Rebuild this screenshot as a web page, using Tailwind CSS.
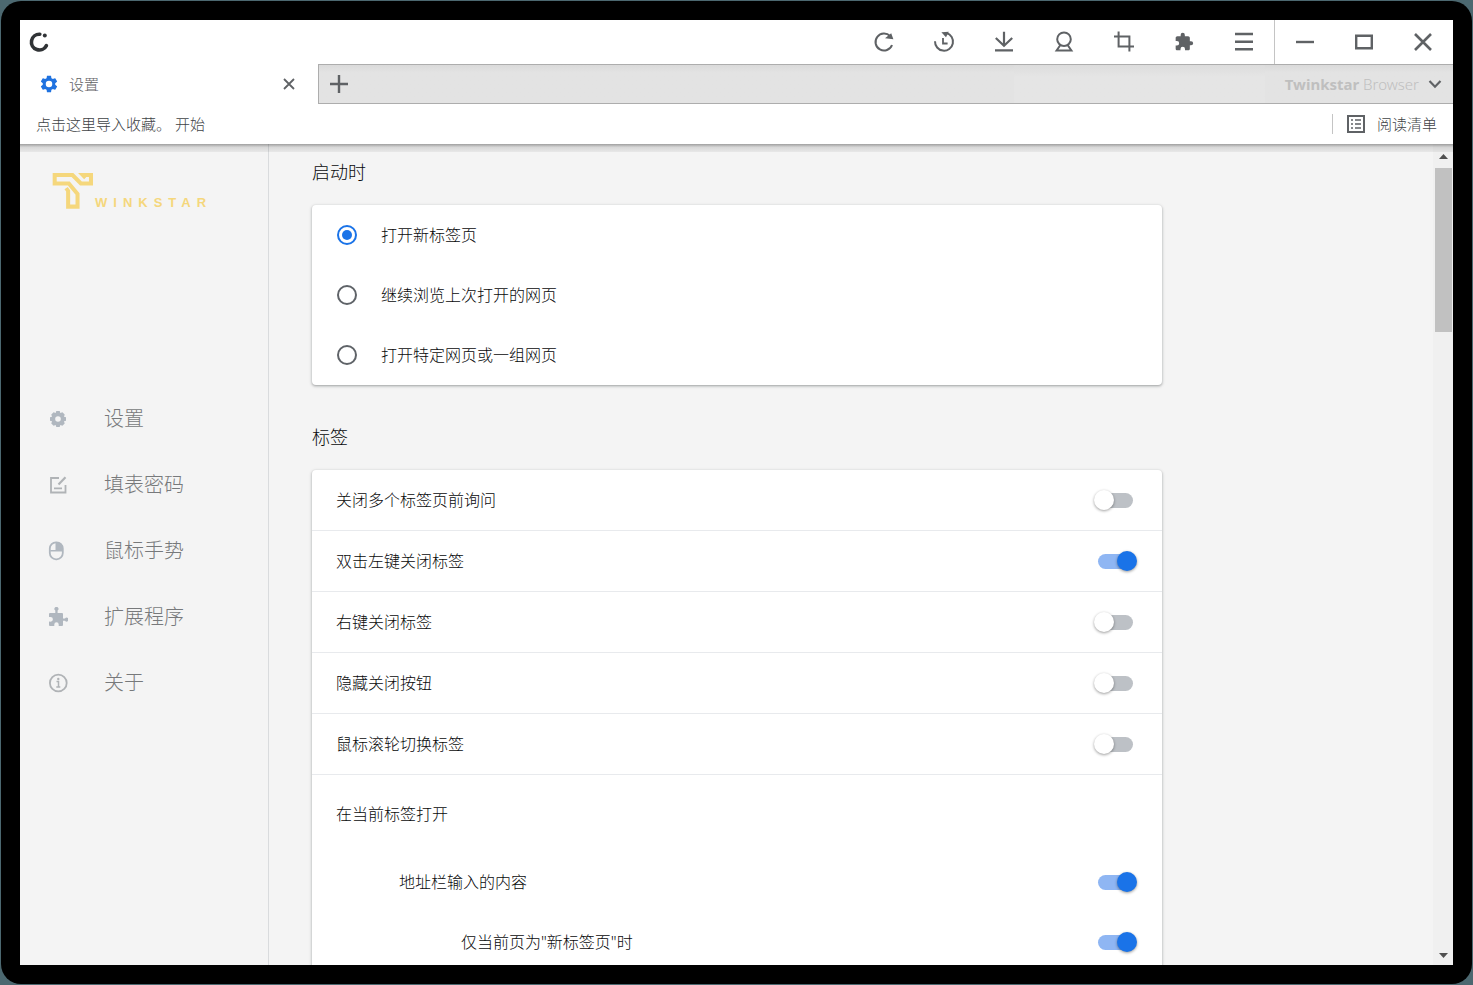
<!DOCTYPE html>
<html lang="zh-CN">
<head>
<meta charset="utf-8">
<meta name="viewport" content="width=device-width, initial-scale=1">
<title>设置</title>
<script src="https://cdn.jsdelivr.net/npm/@tailwindcss/browser@4"></script>
</head>
<body class="h-screen overflow-hidden bg-[#4c6870] p-px font-['Noto_Sans','Noto_Sans_CJK_SC',sans-serif] text-[#08090a]">
<div class="h-full rounded-[20px] bg-black p-[19px]">
<div class="flex h-full flex-col overflow-hidden bg-white">

  <!-- Title bar -->
  <header class="flex h-11 shrink-0 items-center text-[#5f6265]">
    <svg class="ml-[7px] size-6" viewBox="0 0 24 24" fill="none" stroke="#303336" stroke-width="3.6" stroke-linecap="round"><path d="M12.8 4.2A7.900 7.900 0 1 0 19.400 15.600"/><circle cx="17.800" cy="5.400" r="2" fill="#303336" stroke="none"/></svg>
    <nav class="ml-auto flex h-full" aria-label="工具栏">
      <button class="grid w-15 place-items-center" aria-label="刷新"><svg class="size-6" viewBox="0 0 24 24" fill="none" stroke="currentColor" stroke-width="2"><path d="M20 15A8.500 8.500 0 1 1 18.200 6.200"/><path d="M19.200 3.200l2.200 6-8.400-1z" fill="currentColor" stroke="none"/></svg></button>
      <button class="grid w-15 place-items-center" aria-label="恢复"><svg class="size-6" viewBox="0 0 24 24" fill="none" stroke="currentColor" stroke-width="2"><path d="M3 11.300A9 9 0 1 0 14.500 3"/><path d="M9.400 2.200l7.400-.4L14 7.200z" fill="currentColor" stroke="none"/><path d="M11 8v5.500h4.600" stroke-width="1.800"/></svg></button>
      <button class="grid w-15 place-items-center" aria-label="下载"><svg class="size-6" viewBox="0 0 24 24" fill="none" stroke="currentColor" stroke-width="2.200"><path d="M12 1.800V15M3.800 8l8.200 7.800L20.200 8M3 20.400h18"/></svg></button>
      <button class="grid w-15 place-items-center" aria-label="用户"><svg class="size-6" viewBox="0 0 24 24" fill="none" stroke="currentColor" stroke-width="2"><circle cx="12" cy="9.200" r="6.800"/><path d="M8.400 15l-3.800 5.500h14.800L15.600 15"/></svg></button>
      <button class="grid w-15 place-items-center" aria-label="截图"><svg class="size-6" viewBox="0 0 24 24" fill="none" stroke="currentColor" stroke-width="2"><path d="M6.600 1.600v14.800H22M2 6.600h15.400V21.500"/></svg></button>
      <button class="grid w-15 place-items-center" aria-label="扩展"><svg class="size-5" viewBox="0 0 24 24" fill="currentColor"><path d="M20.500 11H19V7c0-1.100-.9-2-2-2h-4V3.500a2.500 2.500 0 0 0-5 0V5H4c-1.100 0-2 .9-2 2v3.800h1.500a2.700 2.700 0 0 1 0 5.400H2V20c0 1.100.9 2 2 2h3.800v-1.500a2.700 2.700 0 0 1 5.400 0V22H17c1.100 0 2-.9 2-2v-4h1.500a2.500 2.500 0 0 0 0-5z"/></svg></button>
      <button class="grid w-15 place-items-center" aria-label="菜单"><svg class="size-6" viewBox="0 0 24 24" fill="none" stroke="currentColor" stroke-width="2.400"><path d="M3 4h18M3 11.700h18M3 19.200h18"/></svg></button>
    </nav>
    <div class="grid h-full w-[179px] grid-cols-3 border-l border-[#c4c4c4]">
      <button class="grid place-items-center" aria-label="最小化"><svg class="size-6" viewBox="0 0 24 24" fill="none" stroke="currentColor" stroke-width="2.400"><path d="M3 12h18"/></svg></button>
      <button class="grid place-items-center" aria-label="最大化"><svg class="size-6" viewBox="0 0 24 24" fill="none" stroke="currentColor" stroke-width="2.400"><path d="M4.200 5.700h15.600v12.600H4.200z"/></svg></button>
      <button class="grid place-items-center" aria-label="关闭"><svg class="size-6" viewBox="0 0 24 24" fill="none" stroke="currentColor" stroke-width="2.600"><path d="M4 4l16 16M20 4L4 20"/></svg></button>
    </div>
  </header>

  <!-- Tab strip -->
  <div class="flex h-10 shrink-0 text-[#5f6265]">
    <div class="flex w-[298px] shrink-0 items-center pr-5 pl-[19px]">
      <svg class="size-5" viewBox="0 0 24 24" fill="#1f72e0"><path fill-rule="evenodd" d="M19.430 12.980c.04-.32.070-.64.070-.98s-.030-.66-.070-.98l2.110-1.650c.19-.15.240-.42.120-.64l-2-3.460c-.12-.22-.39-.3-.61-.22l-2.490 1c-.52-.4-1.080-.73-1.690-.98l-.38-2.650C14.460 2.180 14.250 2 14 2h-4c-.25 0-.46.18-.49.42l-.38 2.650c-.61.25-1.170.59-1.690.98l-2.490-1c-.23-.09-.49 0-.61.220l-2 3.460c-.13.22-.07.49.120.640l2.110 1.650c-.04.32-.07.65-.07.98s.030.66.070.98l-2.110 1.650c-.19.15-.24.42-.12.640l2 3.460c.12.22.39.3.61.220l2.490-1c.52.4 1.080.730 1.690.980l.38 2.650c.030.240.240.420.490.420h4c.25 0 .46-.18.490-.42l.38-2.650c.61-.25 1.170-.59 1.690-.98l2.490 1c.23.090.49 0 .61-.22l2-3.460c.12-.22.070-.49-.12-.64zM12 15.900a3.900 3.900 0 1 1 0-7.800 3.900 3.900 0 0 1 0 7.800z"/></svg>
      <span class="ml-2.5 text-[15px] font-light">设置</span>
      <button class="ml-auto grid size-[18px] place-items-center" aria-label="关闭标签"><svg class="size-3" viewBox="0 0 12 12" fill="none" stroke="currentColor" stroke-width="1.800"><path d="M1 1l10 10M11 1L1 11"/></svg></button>
    </div>
    <div class="flex flex-1 items-center border-y border-l border-[#adadad] bg-[#e3e3e3] bg-linear-to-b from-[#dadada] to-[#e3e3e3] to-20%">
      <button class="ml-2 grid size-6 place-items-center" aria-label="新标签页"><svg class="size-5" viewBox="0 0 20 20" fill="none" stroke="currentColor" stroke-width="2.400"><path d="M10 1v18M1 10h18"/></svg></button>
      <div class="ml-auto h-[38px] w-[251px] bg-linear-to-b from-[#dcdcdc] to-[#e5e5e5] to-30%"></div>
      <div class="ml-5 font-['Noto_Sans'] text-[15px] text-[#bfbfbf]"><b class="font-bold">Twinkstar</b> <span class="font-light">Browser</span></div>
      <button class="mr-2 ml-1.5 grid size-5 place-items-center" aria-label="标签列表"><svg class="size-4" viewBox="0 0 16 16" fill="none" stroke="currentColor" stroke-width="2.200"><path d="M2.500 5L8 10.700 13.500 5"/></svg></button>
    </div>
  </div>

  <!-- Bookmarks bar -->
  <div class="flex h-10 shrink-0 items-center pr-4 pl-4 text-[15px] font-light text-[#404346]">
    <a href="#">点击这里导入收藏。</a>
    <a href="#" class="ml-1">开始</a>
    <a href="#" class="ml-auto flex h-5 items-center border-l border-[#c4c4c4] pl-3.5">
      <svg class="mr-3 size-[18px]" viewBox="0 0 18 18" fill="none" stroke="#5f6265" stroke-width="2"><path d="M1 1h16v16H1z"/><path d="M4 5h2M4 9h2M4 13h2M8 5h6M8 9h6M8 13h6" stroke-width="1.600"/></svg>
      阅读清单</a>
  </div>

  <div class="relative flex min-h-0 flex-1 bg-[#f4f4f4]">
    <div class="pointer-events-none absolute inset-x-0 top-0 h-2 bg-linear-to-b from-black/35 via-black/12 via-40% to-black/5"></div>

    <!-- Sidebar -->
    <aside class="w-[249px] shrink-0 border-r border-[#d9dbdd]">
      <div class="flex items-end gap-0.5 pt-7 pl-8 text-[#f5d77c]">
        <svg class="h-[37px] w-[41px]" viewBox="13 12 122 110" fill="none" stroke="currentColor" stroke-width="12"><path d="M55 60l6 8v47h28V77L63 46H21V21h53l25 25h30V21h-24l8 8"/></svg>
        <span class="font-['Liberation_Sans'] text-[13px] leading-3 font-bold tracking-[6px]">WINKSTAR</span>
      </div>
      <nav class="mt-[177px] flex flex-col text-[20px] font-light text-[#77797b]">
        <a href="#" class="flex h-[66px] items-center pl-7"><svg class="size-5" viewBox="0 0 20 20" fill="#b0b7bf"><path fill-rule="evenodd" d="M8.300 2h3.400l.6 1.900 2.100-.6 2.300 2.300-.7 2.100 2 .6v3.400l-2 .6.7 2.100-2.300 2.300-2.100-.7-.6 2H8.300l-.6-2-2.100.7-2.300-2.300.7-2.100-2-.6V8.300l2-.6-.7-2.100 2.300-2.300 2.100.6zM10 7.200a2.800 2.800 0 1 0 0 5.600 2.800 2.800 0 0 0 0-5.600z"/></svg><span class="ml-9">设置</span></a>
        <a href="#" class="flex h-[66px] items-center pl-7"><svg class="size-5" viewBox="0 0 20 20" fill="none" stroke="#b0b3b6" stroke-width="1.800"><path d="M11 3H3v14.500h14.500V10M6 13.300h8"/><path d="M17.500 2.300l-7 7.200" stroke-width="2.200"/></svg><span class="ml-9">填表密码</span></a>
        <a href="#" class="flex h-[66px] items-center pl-7"><svg class="size-5" viewBox="0 0 20 20" fill="none" stroke="#b0b7bf" stroke-width="1.800"><rect x="1.800" y="1.300" width="13" height="17" rx="6.200"/><path d="M7.500 1.800C12 .8 14.800 3 14.800 7.500v3H2.300V9h5.200z" fill="#b0b7bf" stroke="none"/></svg><span class="ml-9">鼠标手势</span></a>
        <a href="#" class="flex h-[66px] items-center pl-7"><svg class="size-5" viewBox="0 0 20 20" fill="#b0b7bf"><path d="M7.300 6V3.500a2 2 0 1 1 2.300 0V6H14q1 0 1 1v4.500h2a2 2 0 1 1 0 2.200h-2V18q0 1-1 1h-3.300v-1.500a2.200 2.200 0 0 0-4.400 0V19H2q-1 0-1-1v-3.500l1.500.2a2.400 2.400 0 1 0 0-4.800L1 10V7q0-1 1-1z"/></svg><span class="ml-9">扩展程序</span></a>
        <a href="#" class="flex h-[66px] items-center pl-7"><svg class="size-5" viewBox="0 0 20 20" fill="none" stroke="#b0b3b6" stroke-width="1.800"><circle cx="10.300" cy="10" r="8.400"/><path d="M8.500 8.500h2v5M8.300 14h4" stroke-width="1.500"/><circle cx="10.300" cy="6" r="1.200" fill="#b0b3b6" stroke="none"/></svg><span class="ml-9">关于</span></a>
      </nav>
    </aside>

    <!-- Settings list -->
    <main class="min-w-0 flex-1 overflow-hidden px-[43px] pt-3.5 text-[16px] font-light">
      <section>
        <h2 class="text-[18px] leading-7">启动时</h2>
        <div class="mt-[19px] w-full max-w-[850px] rounded bg-white shadow-[0_1px_2px_rgba(60,64,67,0.3),0_1px_3px_1px_rgba(60,64,67,0.15)]">
          <label class="flex h-15 items-center gap-6 pl-[25px]"><input type="radio" name="startup" checked class="grid size-5 shrink-0 appearance-none place-items-center rounded-full border-2 border-[#5f6368] before:size-2.5 before:rounded-full checked:border-[#1a73e8] checked:before:bg-[#1a73e8]">打开新标签页</label>
          <label class="flex h-15 items-center gap-6 pl-[25px]"><input type="radio" name="startup" class="grid size-5 shrink-0 appearance-none place-items-center rounded-full border-2 border-[#5f6368] before:size-2.5 before:rounded-full checked:border-[#1a73e8] checked:before:bg-[#1a73e8]">继续浏览上次打开的网页</label>
          <label class="flex h-15 items-center gap-6 pl-[25px]"><input type="radio" name="startup" class="grid size-5 shrink-0 appearance-none place-items-center rounded-full border-2 border-[#5f6368] before:size-2.5 before:rounded-full checked:border-[#1a73e8] checked:before:bg-[#1a73e8]">打开特定网页或一组网页</label>
        </div>
      </section>
      <section class="mt-[38px]">
        <h2 class="text-[18px] leading-7">标签</h2>
        <div class="mt-[19px] w-full max-w-[850px] rounded bg-white shadow-[0_1px_2px_rgba(60,64,67,0.3),0_1px_3px_1px_rgba(60,64,67,0.15)]">
          <label class="flex h-[61px] items-center justify-between border-b border-[#e8eaed] pr-[29px] pl-6">关闭多个标签页前询问<input type="checkbox" role="switch" class="relative h-[15px] w-[35px] appearance-none rounded-full bg-[#bdc1c6] before:absolute before:-top-[3px] before:-left-1 before:size-5 before:rounded-full before:bg-white before:shadow-[0_1px_3px_rgba(0,0,0,0.4)] checked:bg-[#8fb6f3] checked:before:left-[19px] checked:before:bg-[#1a73e8]"></label>
          <label class="flex h-[61px] items-center justify-between border-b border-[#e8eaed] pr-[29px] pl-6">双击左键关闭标签<input type="checkbox" role="switch" checked class="relative h-[15px] w-[35px] appearance-none rounded-full bg-[#bdc1c6] before:absolute before:-top-[3px] before:-left-1 before:size-5 before:rounded-full before:bg-white before:shadow-[0_1px_3px_rgba(0,0,0,0.4)] checked:bg-[#8fb6f3] checked:before:left-[19px] checked:before:bg-[#1a73e8]"></label>
          <label class="flex h-[61px] items-center justify-between border-b border-[#e8eaed] pr-[29px] pl-6">右键关闭标签<input type="checkbox" role="switch" class="relative h-[15px] w-[35px] appearance-none rounded-full bg-[#bdc1c6] before:absolute before:-top-[3px] before:-left-1 before:size-5 before:rounded-full before:bg-white before:shadow-[0_1px_3px_rgba(0,0,0,0.4)] checked:bg-[#8fb6f3] checked:before:left-[19px] checked:before:bg-[#1a73e8]"></label>
          <label class="flex h-[61px] items-center justify-between border-b border-[#e8eaed] pr-[29px] pl-6">隐藏关闭按钮<input type="checkbox" role="switch" class="relative h-[15px] w-[35px] appearance-none rounded-full bg-[#bdc1c6] before:absolute before:-top-[3px] before:-left-1 before:size-5 before:rounded-full before:bg-white before:shadow-[0_1px_3px_rgba(0,0,0,0.4)] checked:bg-[#8fb6f3] checked:before:left-[19px] checked:before:bg-[#1a73e8]"></label>
          <label class="flex h-[61px] items-center justify-between border-b border-[#e8eaed] pr-[29px] pl-6">鼠标滚轮切换标签<input type="checkbox" role="switch" class="relative h-[15px] w-[35px] appearance-none rounded-full bg-[#bdc1c6] before:absolute before:-top-[3px] before:-left-1 before:size-5 before:rounded-full before:bg-white before:shadow-[0_1px_3px_rgba(0,0,0,0.4)] checked:bg-[#8fb6f3] checked:before:left-[19px] checked:before:bg-[#1a73e8]"></label>
          <div class="flex h-[77px] items-center pl-6">在当前标签打开</div>
          <label class="flex h-15 items-center justify-between pr-[29px] pl-[87px]">地址栏输入的内容<input type="checkbox" role="switch" checked class="relative h-[15px] w-[35px] appearance-none rounded-full bg-[#bdc1c6] before:absolute before:-top-[3px] before:-left-1 before:size-5 before:rounded-full before:bg-white before:shadow-[0_1px_3px_rgba(0,0,0,0.4)] checked:bg-[#8fb6f3] checked:before:left-[19px] checked:before:bg-[#1a73e8]"></label>
          <label class="flex h-15 items-center justify-between pr-[29px] pl-[149px]">仅当前页为"新标签页"时<input type="checkbox" role="switch" checked class="relative h-[15px] w-[35px] appearance-none rounded-full bg-[#bdc1c6] before:absolute before:-top-[3px] before:-left-1 before:size-5 before:rounded-full before:bg-white before:shadow-[0_1px_3px_rgba(0,0,0,0.4)] checked:bg-[#8fb6f3] checked:before:left-[19px] checked:before:bg-[#1a73e8]"></label>
        </div>
      </section>
    </main>

    <!-- Scrollbar -->
    <div class="flex w-5 shrink-0 flex-col items-center bg-[#f0f0f0]">
      <button class="grid h-6 w-full place-items-center" aria-label="向上滚动"><svg class="h-[5px] w-[9px]" viewBox="0 0 9 5" fill="#505050"><path d="M0 5h9L4.500 0z"/></svg></button>
      <div class="h-1/5 w-[17px] bg-[#c1c1c1]"></div>
      <button class="mt-auto grid h-5 w-full place-items-center" aria-label="向下滚动"><svg class="h-[5px] w-[9px]" viewBox="0 0 9 5" fill="#505050"><path d="M0 0h9L4.500 5z"/></svg></button>
    </div>
  </div>
</div>
</div>
</body>
</html>
